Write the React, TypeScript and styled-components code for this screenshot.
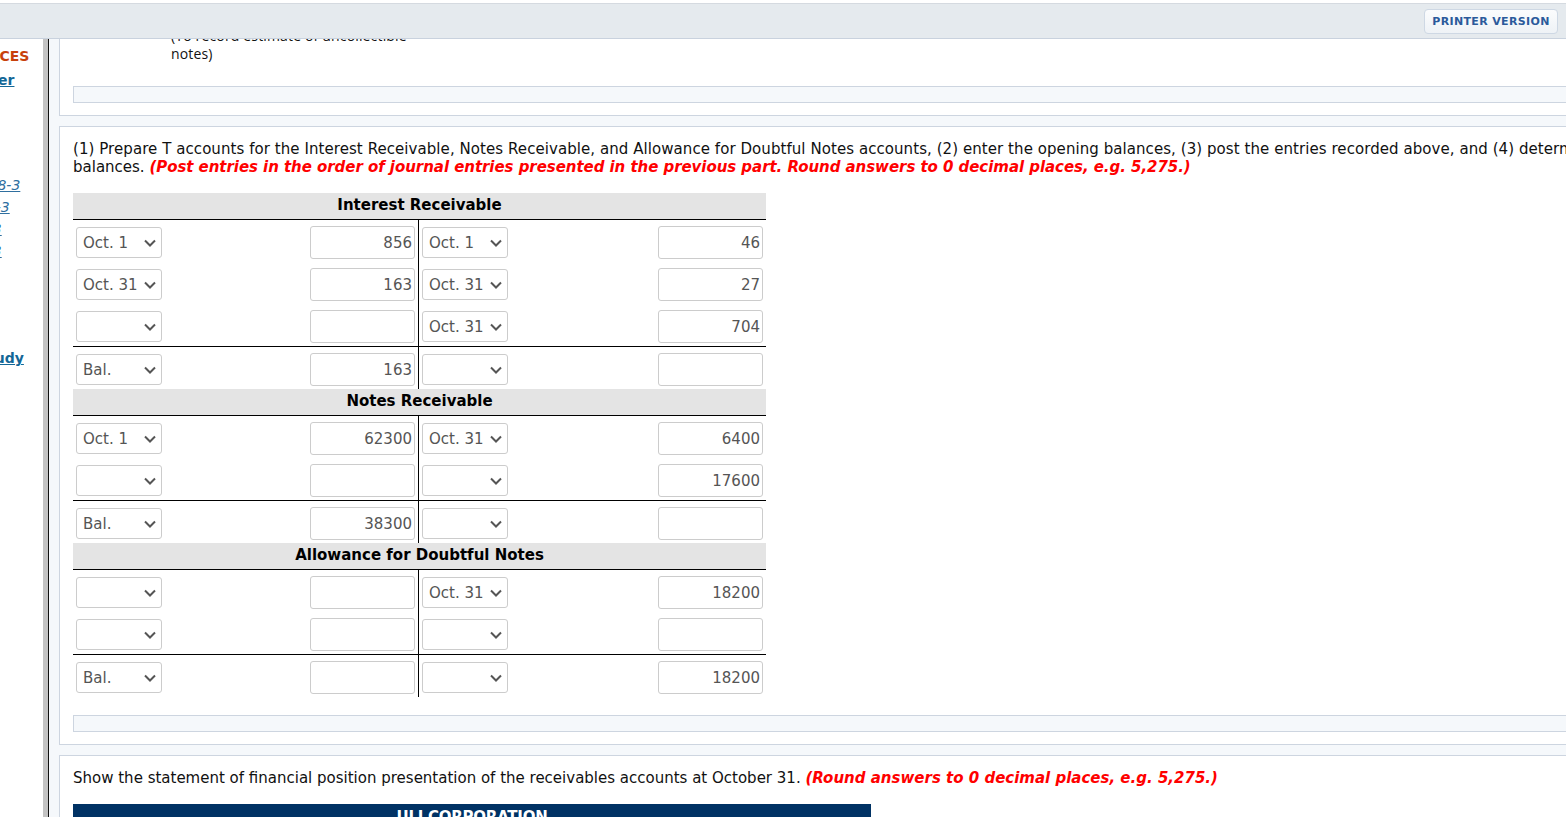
import React from "react";
import styled, { createGlobalStyle } from "styled-components";

const FONT = `"DejaVu Sans", Verdana, sans-serif`;

const GlobalStyle = createGlobalStyle`
  html, body {
    margin: 0;
    height: 817px;
    overflow: hidden;
    background: #fff;
    font-family: ${FONT};
  }
`;

const Page = styled.div`
  height: 817px;
  padding-top: 3px;
  box-sizing: border-box;
  display: flex;
  flex-direction: column;
  overflow: hidden;
`;

const TopBar = styled.header`
  flex: none;
  height: 36px;
  box-sizing: border-box;
  background: #e5eaee;
  border-top: 1px solid #d5dae0;
  border-bottom: 1px solid #c9d2de;
  display: flex;
  justify-content: flex-end;
  align-items: center;
  padding-right: 8px;
`;

const PrinterButton = styled.button`
  height: 25px;
  width: 134px;
  padding: 0;
  border: 1px solid #ced8e4;
  border-radius: 4px;
  background: linear-gradient(#fbfcfd, #eef2f6);
  color: #2b5a9b;
  font-family: ${FONT};
  font-size: 11px;
  font-weight: 700;
  letter-spacing: 0.35px;
`;

const Body = styled.div`
  flex: 1;
  display: flex;
  min-height: 0;
`;

const Sidebar = styled.aside`
  flex: none;
  width: 43px;
  overflow: hidden;
  font-size: 14px;
  line-height: 22px;
  padding-top: 6px;
`;

const SideItem = styled.div<{ $top: number; $shift: number }>`
  margin-top: ${(p) => p.$top}px;
  margin-left: ${(p) => -p.$shift}px;
  white-space: nowrap;
`;

const SideHeading = styled.span`
  color: #c8410b;
  font-weight: 700;
`;

const SideLink = styled.a`
  color: #136797;
  font-weight: 700;
  text-decoration: underline;
`;

const SideRef = styled.a`
  color: #2f6f9f;
  font-style: italic;
  text-decoration: underline;
`;

const Divider = styled.div`
  flex: none;
  width: 6px;
  box-sizing: border-box;
  background: #c4c4c4;
  border-right: 1px solid #111;
`;

const Content = styled.main`
  flex: 1;
  min-width: 0;
  background: #f5f8fb;
  padding-left: 10px;
  overflow: hidden;
`;

const Card = styled.section`
  background: #fff;
  border: 1px solid #cdd5e0;
  border-right: none;
  margin-bottom: 10px;
  padding: 0 0 12px 13px;
`;

const ClippedCard = styled(Card)`
  height: 77px;
  box-sizing: border-box;
  overflow: hidden;
  border-top: none;
  padding-bottom: 0;
`;

const JournalNote = styled.div`
  margin: -12px 0 0 98px;
  width: 260px;
  font-size: 14px;
  line-height: 18px;
  letter-spacing: 0.16px;
  color: #111;
  font-family: "Open Sans", sans-serif;
`;

const Instructions = styled.p`
  margin: 0;
  padding-top: 13px;
  width: 1600px;
  font-size: 15px;
  line-height: 18px;
  color: #111;
`;

const WideLine = styled.span`
  letter-spacing: 0.065px;
`;

const Hint = styled.em<{ $tight?: boolean }>`
  color: #f00;
  font-weight: 700;
  ${(p) => p.$tight && "letter-spacing: -0.05px;"}
`;

const ActionBar = styled.div<{ $top: number }>`
  margin-top: ${(p) => p.$top}px;
  height: 17px;
  box-sizing: border-box;
  background: #f5f8fb;
  border: 1px solid #cdd5e0;
  border-right: none;
`;

const TAccountTable = styled.div`
  width: 693px;
  margin-top: 17px;
`;

const AccountTitle = styled.div`
  height: 27px;
  box-sizing: border-box;
  background: #e4e4e4;
  border-bottom: 1px solid #000;
  text-align: center;
  font-size: 15px;
  font-weight: 700;
  line-height: 24px;
  color: #000;
`;

const Row = styled.div<{ $total?: boolean }>`
  display: grid;
  grid-template-columns: 346px 1fr;
  ${(p) => p.$total && "border-top: 1px solid #000;"}
`;

const Side = styled.div<{ $right?: boolean }>`
  height: 42px;
  box-sizing: border-box;
  display: flex;
  justify-content: space-between;
  align-items: center;
  padding: 3px 3px 0;
  ${(p) => !p.$right && "border-right: 1px solid #000;"}
`;

const SelectWrap = styled.div`
  position: relative;
  width: 86px;
  height: 31px;
`;

const DateSelect = styled.select`
  appearance: none;
  display: block;
  width: 100%;
  height: 100%;
  box-sizing: border-box;
  padding: 0 0 0 6px;
  background: #fff;
  border: 1px solid #ccc;
  border-radius: 3px;
  color: #555;
  font-family: ${FONT};
  font-size: 15px;
`;

const Chevron = styled.svg`
  position: absolute;
  right: 6px;
  top: 12px;
  width: 12px;
  height: 8px;
  pointer-events: none;
`;

const Amount = styled.input`
  width: 105px;
  height: 33px;
  box-sizing: border-box;
  padding: 0 2px 0 0;
  text-align: right;
  background: #fff;
  border: 1px solid #ccc;
  border-radius: 3px;
  color: #555;
  font-family: ${FONT};
  font-size: 15px;
`;

const StatementHeader = styled.div`
  margin-top: 17px;
  width: 798px;
  height: 40px;
  padding-top: 4px;
  background: #003264;
  color: #fff;
  font-size: 15px;
  font-weight: 700;
  letter-spacing: -0.25px;
  text-align: center;
  line-height: 19px;
  text-transform: uppercase;
`;

type Entry = [string, string, string, string];
type Account = { title: string; rows: Entry[]; total: Entry };

const ACCOUNTS: Account[] = [
  {
    title: "Interest Receivable",
    rows: [
      ["Oct. 1", "856", "Oct. 1", "46"],
      ["Oct. 31", "163", "Oct. 31", "27"],
      ["", "", "Oct. 31", "704"],
    ],
    total: ["Bal.", "163", "", ""],
  },
  {
    title: "Notes Receivable",
    rows: [
      ["Oct. 1", "62300", "Oct. 31", "6400"],
      ["", "", "", "17600"],
    ],
    total: ["Bal.", "38300", "", ""],
  },
  {
    title: "Allowance for Doubtful Notes",
    rows: [
      ["", "", "Oct. 31", "18200"],
      ["", "", "", ""],
    ],
    total: ["Bal.", "", "", "18200"],
  },
];

const DATES = ["", "Oct. 1", "Oct. 31", "Bal."];

function DateField({ value }: { value: string }) {
  return (
    <SelectWrap>
      <DateSelect defaultValue={value}>
        {DATES.map((d) => (
          <option key={d} value={d}>
            {d}
          </option>
        ))}
      </DateSelect>
      <Chevron viewBox="0 0 12 8">
        <path d="M1 1.5 L6 6.5 L11 1.5" fill="none" stroke="#555" strokeWidth="2" />
      </Chevron>
    </SelectWrap>
  );
}

function EntryRow({ entry, total }: { entry: Entry; total?: boolean }) {
  return (
    <Row $total={total}>
      <Side>
        <DateField value={entry[0]} />
        <Amount defaultValue={entry[1]} />
      </Side>
      <Side $right>
        <DateField value={entry[2]} />
        <Amount defaultValue={entry[3]} />
      </Side>
    </Row>
  );
}

export default function App() {
  return (
    <Page>
      <GlobalStyle />
      <TopBar>
        <PrinterButton>PRINTER VERSION</PrinterButton>
      </TopBar>
      <Body>
        <Sidebar>
          <SideItem $top={0} $shift={65}>
            <SideHeading>RESOURCES</SideHeading>
          </SideItem>
          <SideItem $top={2} $shift={44}>
            <SideLink>Answer</SideLink>
          </SideItem>
          <SideItem $top={83} $shift={21}>
            <SideRef>BE8-3</SideRef>
          </SideItem>
          <SideItem $top={0} $shift={22}>
            <SideRef>E8-3</SideRef>
          </SideItem>
          <SideItem $top={0} $shift={30}>
            <SideRef>E8-3</SideRef>
          </SideItem>
          <SideItem $top={0} $shift={30}>
            <SideRef>E8-3</SideRef>
          </SideItem>
          <SideItem $top={85} $shift={22}>
            <SideLink>Study</SideLink>
          </SideItem>
        </Sidebar>
        <Divider />
        <Content>
          <ClippedCard>
            <JournalNote>
              (To record estimate of uncollectible
              <br />
              notes)
            </JournalNote>
            <ActionBar $top={23} />
          </ClippedCard>
          <Card>
            <Instructions>
              <WideLine>
                (1) Prepare T accounts for the Interest Receivable, Notes Receivable, and Allowance for Doubtful Notes
                accounts, (2) enter the opening balances, (3) post the entries recorded above, and (4) determine the
              </WideLine>
              <br />
              balances.{" "}
              <Hint $tight>
                (Post entries in the order of journal entries presented in the previous part. Round answers to 0
                decimal places, e.g. 5,275.)
              </Hint>
            </Instructions>
            <TAccountTable>
              {ACCOUNTS.map((a) => (
                <div key={a.title}>
                  <AccountTitle>{a.title}</AccountTitle>
                  {a.rows.map((r, i) => (
                    <EntryRow key={i} entry={r} />
                  ))}
                  <EntryRow entry={a.total} total />
                </div>
              ))}
            </TAccountTable>
            <ActionBar $top={18} />
          </Card>
          <Card>
            <Instructions>
              Show the statement of financial position presentation of the receivables accounts at October 31.{" "}
              <Hint>(Round answers to 0 decimal places, e.g. 5,275.)</Hint>
            </Instructions>
            <StatementHeader>Uli Corporation</StatementHeader>
          </Card>
        </Content>
      </Body>
    </Page>
  );
}
